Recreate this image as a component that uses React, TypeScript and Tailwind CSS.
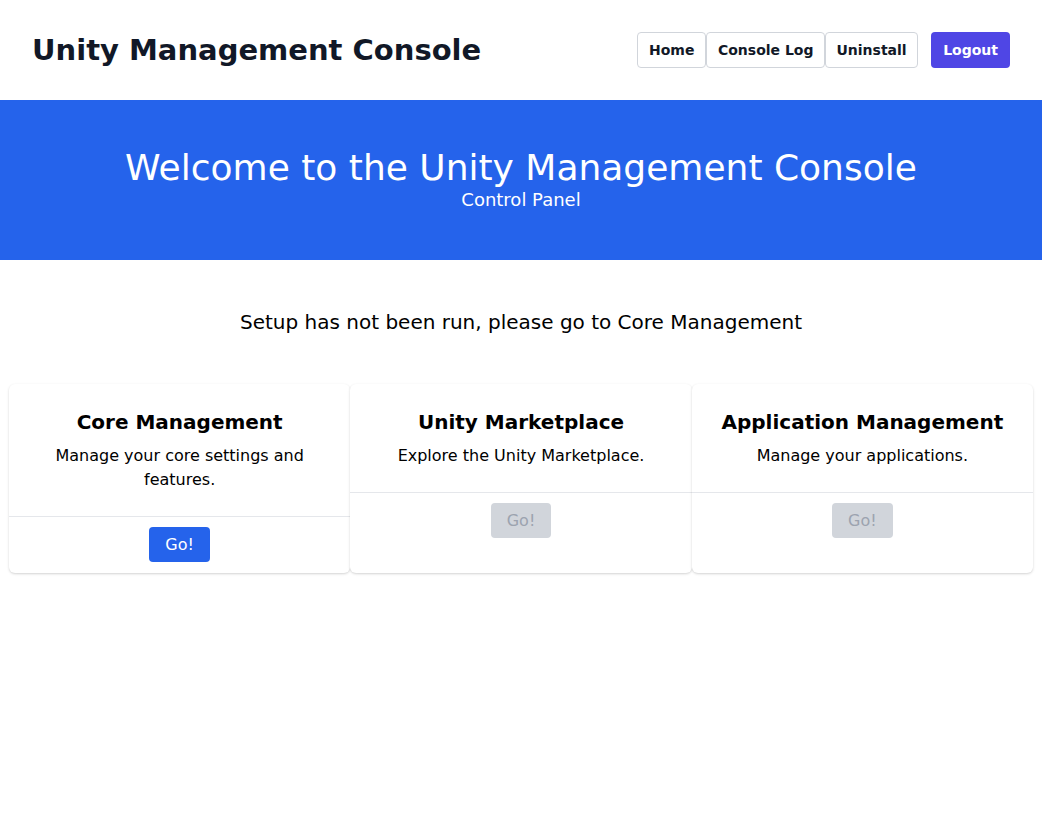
import React from "react";

const cards = [
  { title: "Core Management", desc: "Manage your core settings and features.", enabled: true },
  { title: "Unity Marketplace", desc: "Explore the Unity Marketplace.", enabled: false },
  { title: "Application Management", desc: "Manage your applications.", enabled: false },
];

export default function App() {
  return (
    <div className="min-h-screen bg-white text-black font-['DejaVu_Sans',sans-serif]">
      <header className="h-[100px] flex items-center justify-between px-8">
        <h1 className="text-[29px] leading-9 font-bold text-[#111827]">Unity Management Console</h1>
        <nav className="flex items-center">
          <button className="h-9 px-[11px] border border-[#d1d5db] rounded text-sm font-bold text-[#111827] bg-white">Home</button>
          <button className="h-9 px-[10.5px] border border-[#d1d5db] rounded text-sm font-bold text-[#111827] bg-white">Console Log</button>
          <button className="h-9 px-[10.5px] border border-[#d1d5db] rounded text-sm font-bold text-[#111827] bg-white">Uninstall</button>
          <button className="ml-[13px] h-9 px-3 rounded text-sm font-bold text-white bg-[#4f46e5]">Logout</button>
        </nav>
      </header>
      <section className="h-40 pt-1 bg-[#2563eb] flex flex-col items-center justify-center text-white">
        <h2 className="text-4xl leading-none">Welcome to the Unity Management Console</h2>
        <p className="text-lg">Control Panel</p>
      </section>
      <main className="pt-12">
        <p className="text-xl text-center">Setup has not been run, please go to Core Management</p>
        <div className="mt-12 max-w-screen-lg mx-auto grid grid-cols-3">
          {cards.map((c) => (
            <div key={c.title} className="bg-white rounded-md shadow-[0_1px_3px_rgba(0,0,0,0.12),0_1px_2px_rgba(0,0,0,0.06)] flex flex-col">
              <div className="p-6 text-center border-b border-[#e5e7eb]">
                <h3 className="text-xl font-bold">{c.title}</h3>
                <p className="mt-2 text-base">{c.desc}</p>
              </div>
              <div className="pt-[10px] pb-[11px] flex justify-center flex-1 items-start">
                <button
                  disabled={!c.enabled}
                  className={
                    c.enabled
                      ? "h-[35px] px-4 rounded bg-[#2563eb] text-white text-base"
                      : "h-[35px] px-4 rounded bg-[#d1d5db] text-[#9ca3af] text-base"
                  }
                >
                  Go!
                </button>
              </div>
            </div>
          ))}
        </div>
      </main>
    </div>
  );
}
